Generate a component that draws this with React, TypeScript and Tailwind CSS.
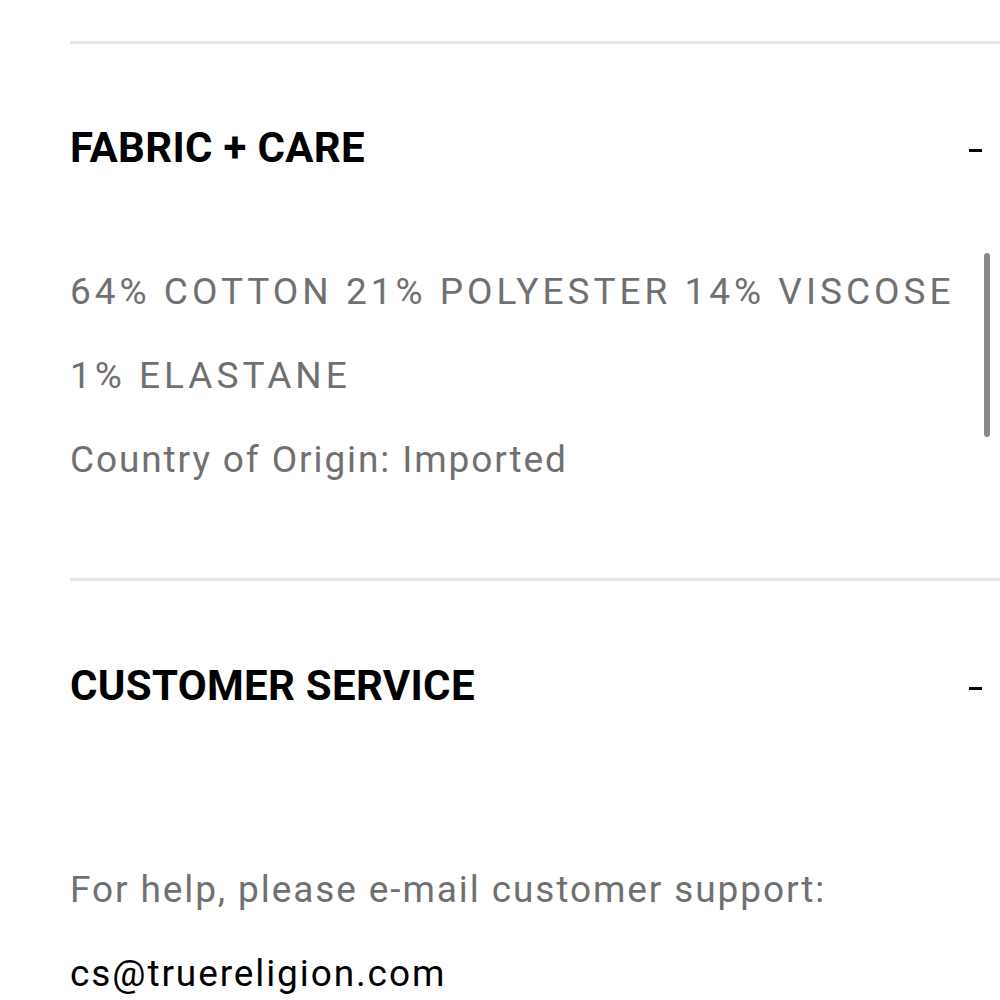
const Minus = () => <span className="mt-[4px] block h-[3px] w-[13px] bg-black" />;

const App = () => {
  return (
    <div className="relative h-[1000px] w-[1000px] overflow-hidden bg-white pl-[70px] pt-[41px] font-['Roboto',sans-serif]">
      <section className="border-t-[3px] border-[#e6e6e6]">
        <div className="flex items-center justify-between pt-[80px] pr-[18px]">
          <h3 className="text-[42px] font-bold leading-[48px] tracking-[0.3px] text-black">FABRIC + CARE</h3>
          <Minus />
        </div>
        <div className="pt-[78px] pb-[76px] pr-[40px] text-[37px] leading-[84px] tracking-[1.9px] text-[#707070]">
          <p className="tracking-[4px]">64% COTTON 21% POLYESTER 14% VISCOSE 1% ELASTANE</p>
          <p>Country of Origin: Imported</p>
        </div>
      </section>
      <section className="border-t-[3px] border-[#e6e6e6]">
        <div className="flex items-center justify-between pt-[81px] pr-[18px]">
          <h3 className="text-[42px] font-bold leading-[48px] tracking-[0.3px] text-black">CUSTOMER SERVICE</h3>
          <Minus />
        </div>
        <div className="pt-[138px] text-[37px] leading-[84px] tracking-[1.9px]">
          <p className="text-[#707070]">For help, please e-mail customer support:</p>
          <p className="text-black">cs@truereligion.com</p>
        </div>
      </section>
      <div className="absolute right-[10px] top-[253px] h-[184px] w-[6px] rounded-full bg-[#8a8a8a]" />
    </div>
  );
};

export default App;
